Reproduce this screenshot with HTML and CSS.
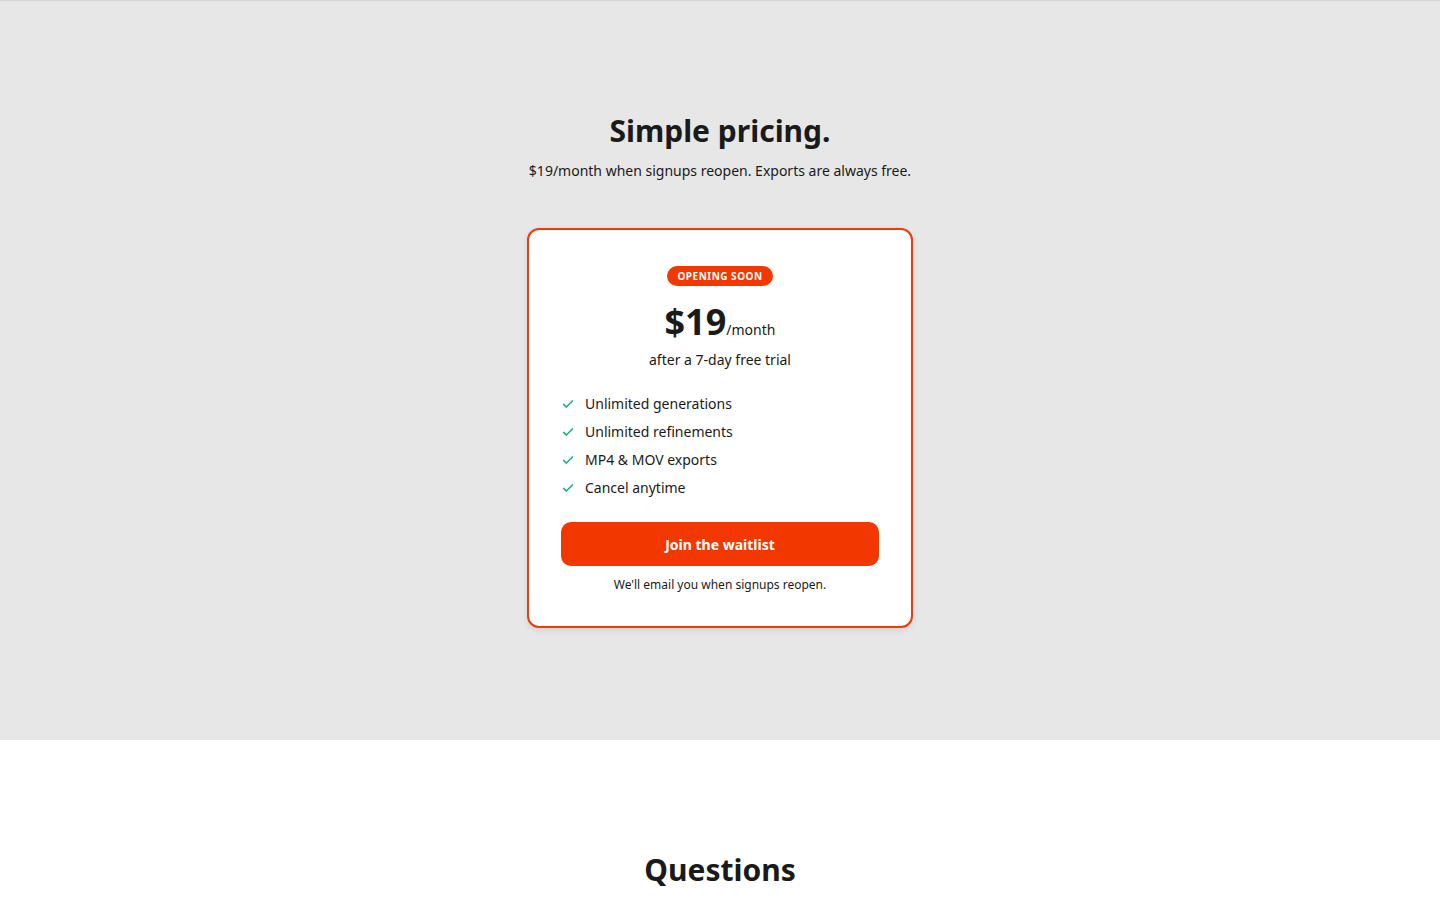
FILE: index.html
```html
<!DOCTYPE html>
<html lang="en">
<head>
  <meta charset="UTF-8">
  <meta name="viewport" content="width=device-width, initial-scale=1.0">
  <title>Pricing</title>
  <link rel="stylesheet" href="styles.css">
</head>
<body>
  <section class="pricing">
    <h2 class="section-title">Simple pricing.</h2>
    <p class="section-sub">$19/month when signups reopen. Exports are always free.</p>

    <div class="plan-card">
      <span class="badge">Opening soon</span>
      <div class="price"><span class="price-amount">$19</span><span class="price-unit">/month</span></div>
      <p class="trial">after a 7-day free trial</p>

      <ul class="features">
        <li><svg class="check" viewBox="0 0 16 16"><path d="M3 8.5l3.2 3L13 4.5"/></svg>Unlimited generations</li>
        <li><svg class="check" viewBox="0 0 16 16"><path d="M3 8.5l3.2 3L13 4.5"/></svg>Unlimited refinements</li>
        <li><svg class="check" viewBox="0 0 16 16"><path d="M3 8.5l3.2 3L13 4.5"/></svg>MP4 &amp; MOV exports</li>
        <li><svg class="check" viewBox="0 0 16 16"><path d="M3 8.5l3.2 3L13 4.5"/></svg>Cancel anytime</li>
      </ul>

      <button class="cta">Join the waitlist</button>
      <p class="note">We'll email you when signups reopen.</p>
    </div>
  </section>

  <section class="faq">
    <h2 class="section-title">Questions</h2>
  </section>
</body>
</html>
```

FILE: styles.css
```css
* {
  box-sizing: border-box;
}
body, html {
  margin: 0;
  padding: 0;
  font-family: "Noto Sans", sans-serif;
  color: #1a1a1a;
  background: #fff;
}

.pricing {
  background: #e7e7e7;
  border-top: 1px solid #d6d6d6;
  padding: 112px 20px 112px;
  display: flex;
  flex-direction: column;
  align-items: center;
}

.section-title {
  margin: 0;
  font-size: 30px;
  font-weight: 700;
  line-height: 36px;
  text-align: center;
}

.section-sub {
  margin: 12px 0 0;
  font-size: 14px;
  line-height: 20px;
}

.plan-card {
  margin-top: 47px;
  width: 386px;
  background: #fff;
  border: 2px solid #ee3a0c;
  border-radius: 12px;
  padding: 36px 32px 32px;
  box-shadow: 0 2px 6px rgba(0,0,0,0.1);
  display: flex;
  flex-direction: column;
  align-items: center;
}

.badge {
  background: #f23800;
  color: #fff;
  font-size: 10px;
  font-weight: 700;
  letter-spacing: 0.5px;
  text-transform: uppercase;
  line-height: 20px;
  padding: 0 10px;
  border-radius: 10px;
}

.price {
  margin-top: 14px;
  line-height: 44px;
  height: 44px;
  text-align: center;
}

.price-amount {
  font-size: 36px;
  font-weight: 700;
}

.price-unit {
  font-size: 14px;
  line-height: 1;
}

.trial {
  margin: 6px 0 0;
  font-size: 14px;
  line-height: 20px;
}

.features {
  list-style: none;
  margin: 24px 0 0;
  padding: 0;
  align-self: stretch;
  display: flex;
  flex-direction: column;
  gap: 8px;
}

.features li {
  display: flex;
  align-items: center;
  gap: 10px;
  font-size: 14px;
  line-height: 20px;
}

.check {
  width: 14px;
  height: 14px;
  fill: none;
  stroke: #1fb07a;
  stroke-width: 1.8;
  stroke-linecap: round;
  stroke-linejoin: round;
}

.cta {
  margin-top: 24px;
  align-self: stretch;
  height: 44px;
  border: none;
  border-radius: 10px;
  background: #f23800;
  color: #fff;
  font-family: inherit;
  font-size: 14px;
  font-weight: 700;
  cursor: pointer;
}

.note {
  margin: 10px 0 0;
  font-size: 12px;
  line-height: 18px;
}

.faq {
  padding: 112px 20px 40px;
}
```
